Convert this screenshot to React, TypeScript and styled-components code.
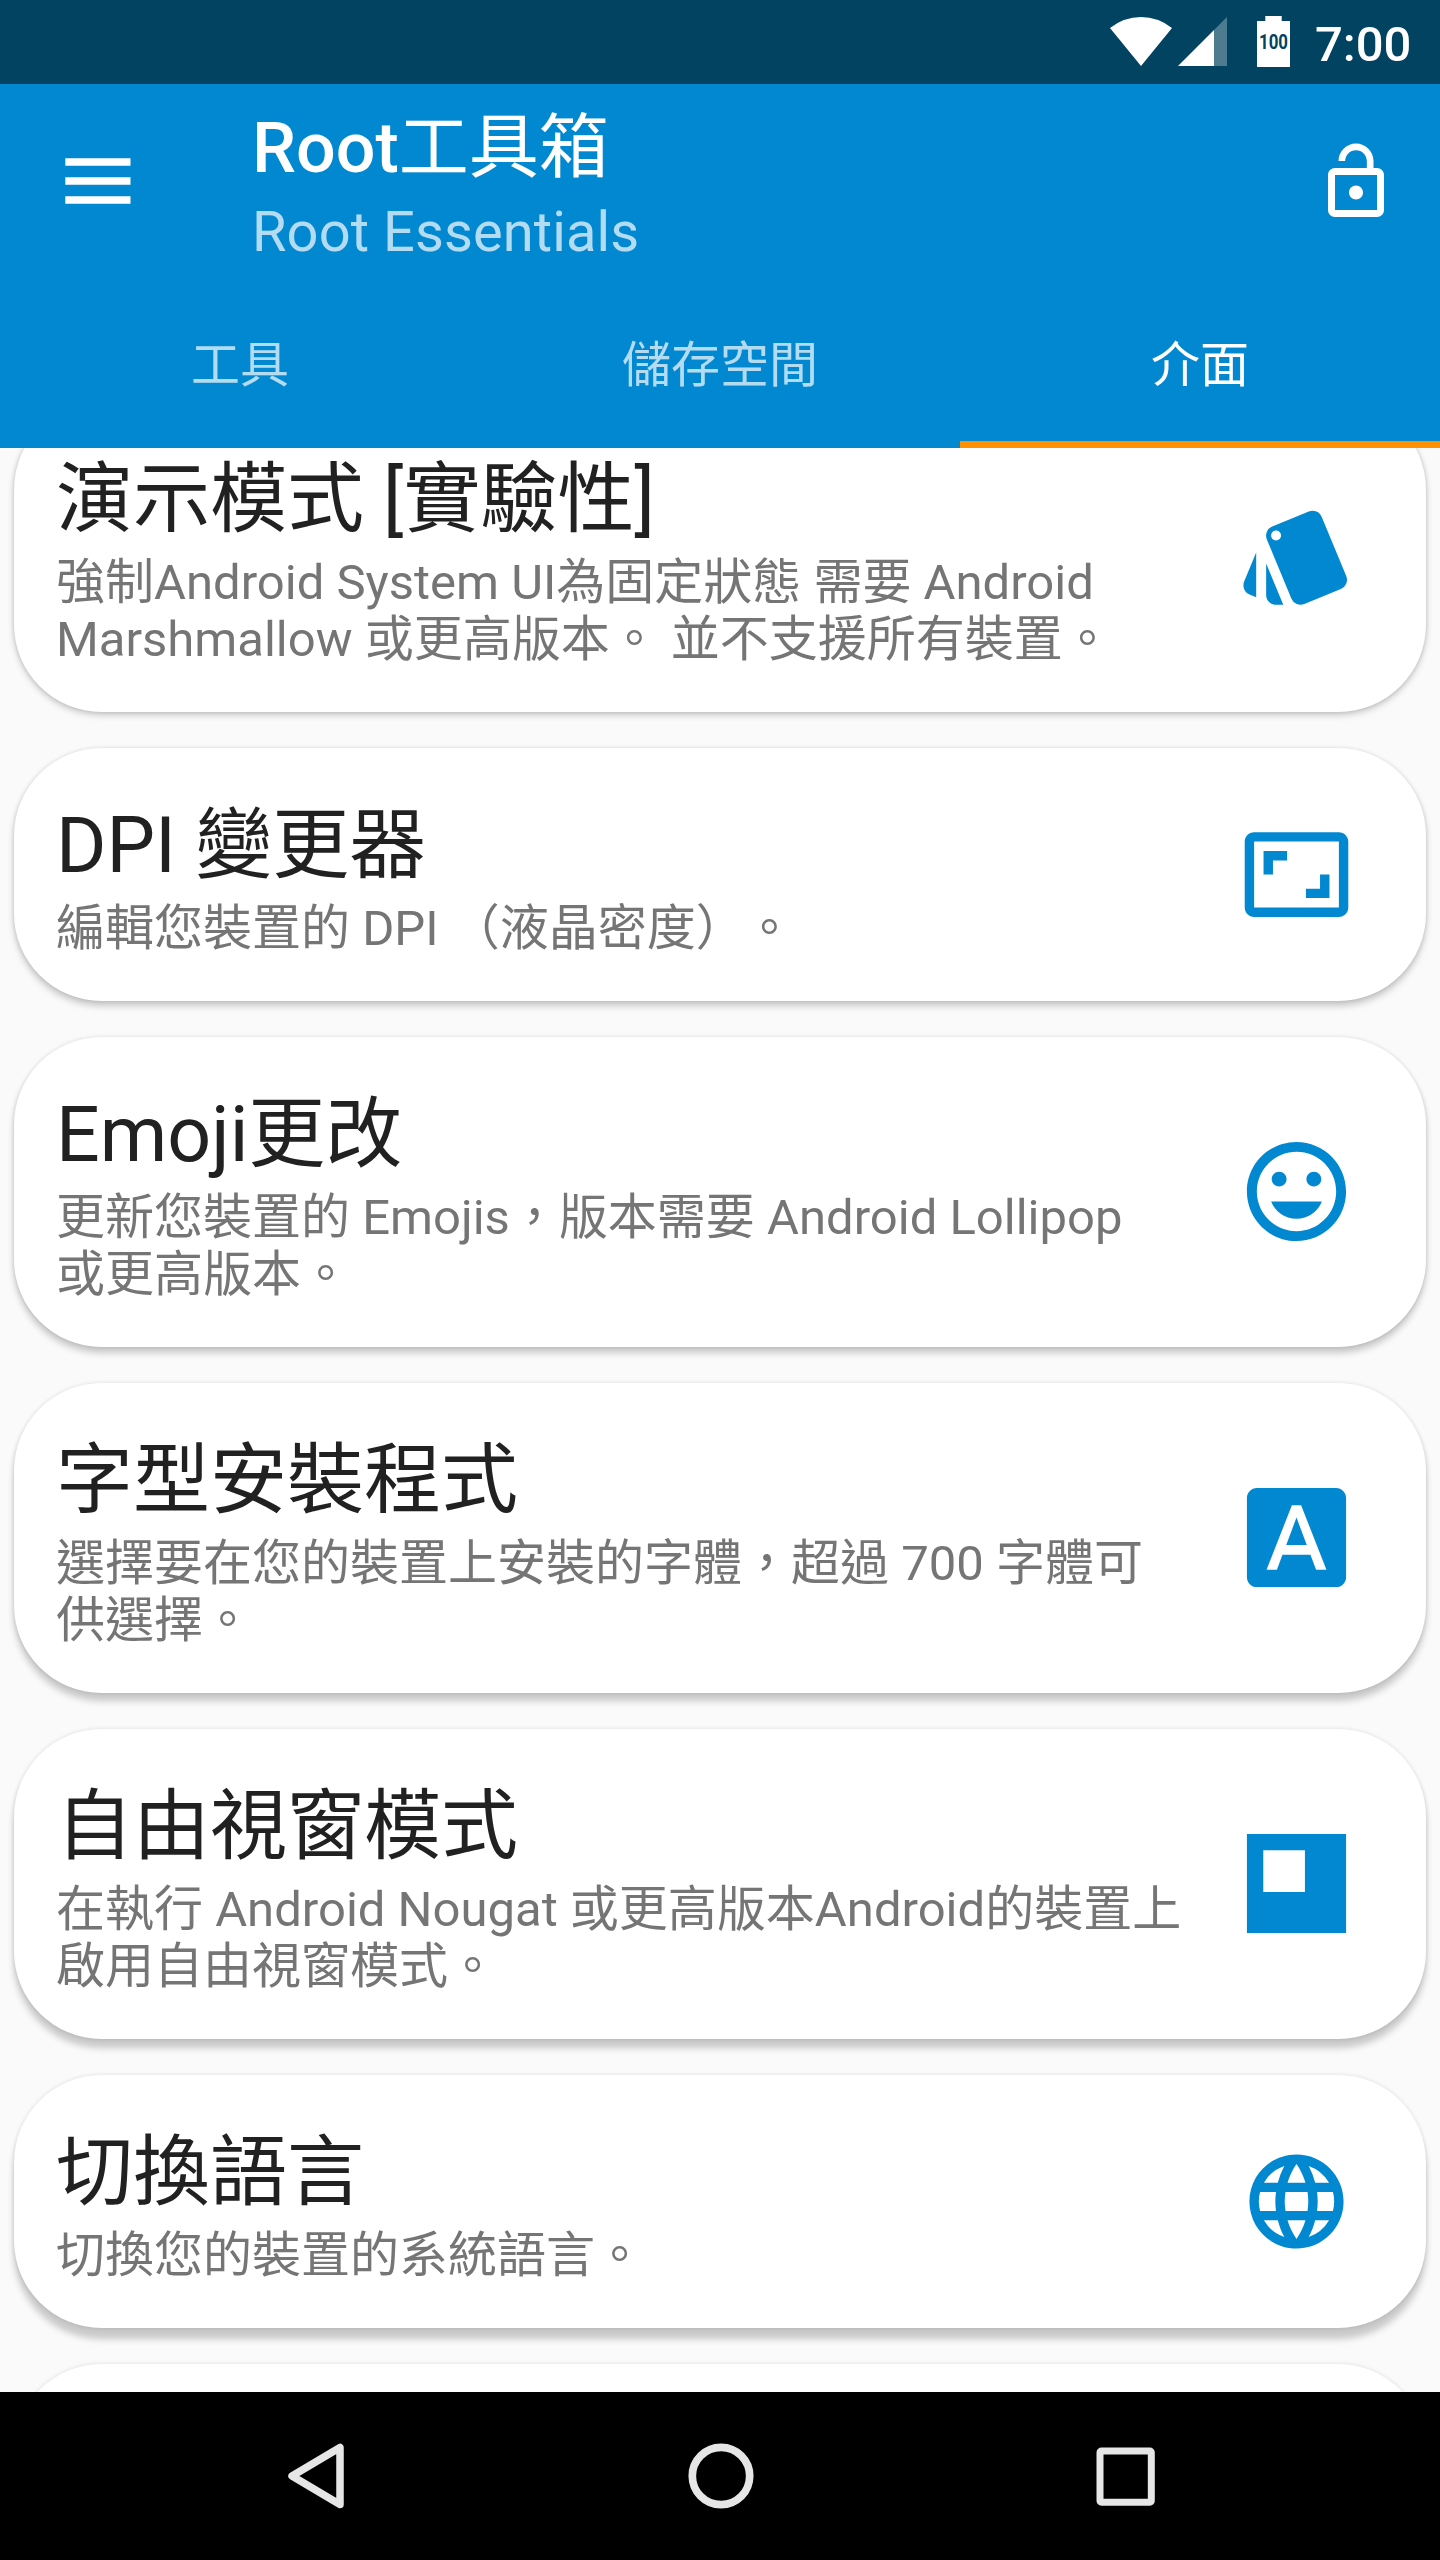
import React from 'react';
import styled, { createGlobalStyle } from 'styled-components';
import type { IconType } from 'react-icons';
import {
  MdAspectRatio,
  MdFontDownload,
  MdInsertEmoticon,
  MdLanguage,
  MdLockOpen,
  MdStyle,
} from 'react-icons/md';

const primary = '#0288d1';

const GlobalStyle = createGlobalStyle`
  * { box-sizing: border-box; }
  body {
    margin: 0;
    font-family: Roboto, "Noto Sans CJK TC", sans-serif;
    text-spacing-trim: space-all;
  }
  svg { display: block; flex: none; }
`;

const Screen = styled.div`
  display: flex;
  flex-direction: column;
  width: 1440px;
  height: 2560px;
  overflow: hidden;
  background: #fafafa;
`;

const StatusBar = styled.header`
  display: flex;
  justify-content: flex-end;
  align-items: flex-start;
  flex: none;
  height: 84px;
  padding: 16px 28px 0 0;
  background: #014361;
`;

const WifiIcon = styled.svg`
  margin: 1px 6px 0 0;
`;

const SignalIcon = styled.svg`
  margin: 1px 30px 0 0;
`;

const BatteryIcon = styled.svg`
  overflow: visible;
`;

const Clock = styled.time`
  width: 97px;
  margin-left: 25px;
  font-size: 49px;
  font-weight: 500;
  line-height: 57px;
  white-space: nowrap;
  color: #fff;
`;

const AppBar = styled.div`
  flex: none;
  height: 364px;
  background: ${primary};
  display: flex;
  flex-direction: column;
  justify-content: space-between;
`;

const Toolbar = styled.div`
  display: flex;
  align-items: center;
  height: 196px;
  padding: 0 42px 0 65px;
`;

const MenuIcon = styled.svg`
  margin-bottom: 3px;
`;

const Titles = styled.div`
  flex: 1;
  padding: 8px 0 0 121px;
`;

const AppTitle = styled.h1`
  margin: 0 0 10px;
  font-size: 70px;
  font-weight: 500;
  line-height: 82px;
  color: #fff;
`;

const Ideographs = styled.span`
  font-weight: 400;
`;

const AppSubtitle = styled.div`
  font-size: 56px;
  line-height: 66px;
  letter-spacing: 0.1px;
  color: rgba(255, 255, 255, 0.7);
`;

const Tabs = styled.nav`
  display: grid;
  grid-template-columns: repeat(3, 1fr);
  height: 168px;
`;

const Tab = styled.div<{ $active?: boolean }>`
  display: flex;
  align-items: center;
  justify-content: center;
  border-bottom: 7px solid ${(p) => (p.$active ? '#ff9100' : 'transparent')};
  font-size: 49px;
  line-height: 57px;
  padding-top: 10px;
  color: ${(p) => (p.$active ? '#fff' : 'rgba(255, 255, 255, 0.7)')};
`;

const List = styled.main`
  display: flex;
  flex-direction: column;
  justify-content: flex-end;
  gap: 36px;
  height: 1944px;
  padding: 0 14px;
  overflow: hidden;
`;

const Card = styled.article<{ $depth: number }>`
  display: flex;
  align-items: center;
  justify-content: space-between;
  flex: none;
  padding: 53px 0 44px 42px;
  border-radius: 87.5px;
  background: #fff;
  box-shadow:
    0 ${(p) => p.$depth}px 7px rgba(0, 0, 0, 0.2),
    0 0 4px rgba(0, 0, 0, 0.12);
`;

const CutOffClip = styled.div`
  flex: none;
  height: 28px;
`;

const CutOffCard = styled(Card)`
  height: 253px;
`;

const CardTitle = styled.h2`
  margin: 0 0 9px;
  font-size: 77px;
  font-weight: 400;
  line-height: 90px;
  color: #212121;
`;

const CardText = styled.p`
  margin: 0;
  font-size: 49px;
  line-height: 57px;
  white-space: pre;
  color: #757575;
`;

const IconSlot = styled.div`
  display: flex;
  align-items: center;
  justify-content: center;
  flex: none;
  width: 119px;
  height: 119px;
  margin: -5px 70px 5px 0;
  color: ${primary};
`;

const NavBar = styled.footer`
  display: flex;
  align-items: center;
  justify-content: space-between;
  flex: none;
  height: 168px;
  padding: 0 285px 0 287px;
  background: #000;
`;

const FreeformIcon: IconType = ({ size }) => (
  <svg width={size} height={size} viewBox="0 0 24 24" fill="currentColor">
    <path fillRule="evenodd" d="M2 2h20v20H2zM5.3 5.3v8.4h8.4V5.3z" />
  </svg>
);

interface Feature {
  title: string;
  lines: string[];
  icon: IconType;
  size: number;
  depth: number;
}

const features: Feature[] = [
  {
    title: '演示模式 [實驗性]',
    lines: ['強制Android System UI為固定狀態 需要 Android', 'Marshmallow 或更高版本。 並不支援所有裝置。'],
    icon: MdStyle,
    size: 119,
    depth: 3,
  },
  { title: 'DPI 變更器', lines: ['編輯您裝置的 DPI （液晶密度）。'], icon: MdAspectRatio, size: 113, depth: 5 },
  {
    title: 'Emoji更改',
    lines: ['更新您裝置的 Emojis，版本需要 Android Lollipop', '或更高版本。'],
    icon: MdInsertEmoticon,
    size: 119,
    depth: 6,
  },
  {
    title: '字型安裝程式',
    lines: ['選擇要在您的裝置上安裝的字體，超過 700 字體可', '供選擇。'],
    icon: MdFontDownload,
    size: 119,
    depth: 8,
  },
  {
    title: '自由視窗模式',
    lines: ['在執行 Android Nougat 或更高版本Android的裝置上', '啟用自由視窗模式。'],
    icon: FreeformIcon,
    size: 119,
    depth: 9,
  },
  { title: '切換語言', lines: ['切換您的裝置的系統語言。'], icon: MdLanguage, size: 113, depth: 11 },
];

export default function App() {
  return (
    <Screen lang="zh-TW">
      <GlobalStyle />
      <StatusBar>
        <WifiIcon width="62" height="49" viewBox="0 0 62 49" fill="#fff">
          <path d="M31 49 0 11Q14 0 31 0T62 11Z" />
        </WifiIcon>
        <SignalIcon width="49" height="49" viewBox="0 0 49 49" fill="#fff">
          <path d="M36 13 49 0V49H36Z" opacity="0.3" />
          <path d="M0 49 36 13V49Z" />
        </SignalIcon>
        <BatteryIcon width="33" height="51" viewBox="0 0 33 51">
          <path d="M8.3 0h16.4v5H33v46H0V5h8.3z" fill="#fff" />
          <text
            x="2"
            y="32.7"
            fontSize="20"
            fontWeight="700"
            textLength="29"
            lengthAdjust="spacingAndGlyphs"
            fill="#014361"
          >
            100
          </text>
        </BatteryIcon>
        <Clock>7:00</Clock>
      </StatusBar>
      <AppBar>
        <Toolbar>
          <MenuIcon width="66" height="48" viewBox="0 0 66 48" fill="#fff">
            <path d="M.3 1.2h65.2v7.6H.3zM.3 20.2h65.2v7.6H.3zM.3 39.2h65.2v7.6H.3z" />
          </MenuIcon>
          <Titles>
            <AppTitle>
              Root<Ideographs>工具箱</Ideographs>
            </AppTitle>
            <AppSubtitle>Root Essentials</AppSubtitle>
          </Titles>
          <MdLockOpen size={84} color="#fff" />
        </Toolbar>
        <Tabs>
          <Tab>工具</Tab>
          <Tab>儲存空間</Tab>
          <Tab $active>介面</Tab>
        </Tabs>
      </AppBar>
      <List>
        {features.map(({ title, lines, icon: Icon, size, depth }) => (
          <Card key={title} $depth={depth}>
            <div>
              <CardTitle>{title}</CardTitle>
              <CardText>{lines.join('\n')}</CardText>
            </div>
            <IconSlot>
              <Icon size={size} />
            </IconSlot>
          </Card>
        ))}
        <CutOffClip>
          <CutOffCard as="div" $depth={11} />
        </CutOffClip>
      </List>
      <NavBar>
        <svg width="58" height="66" viewBox="0 0 58 66" fill="none" stroke="#e6e6e6" strokeWidth="7.5" strokeLinejoin="round">
          <path d="M53 4.5V61.5L5 33Z" />
        </svg>
        <svg width="66" height="66" viewBox="0 0 66 66" fill="none" stroke="#e6e6e6" strokeWidth="7.7">
          <circle cx="33" cy="33" r="28.7" />
        </svg>
        <svg width="59" height="59" viewBox="0 0 59 59" fill="none" stroke="#e6e6e6" strokeWidth="7">
          <rect x="4" y="4" width="51.3" height="51.3" rx="1.5" />
        </svg>
      </NavBar>
    </Screen>
  );
}
